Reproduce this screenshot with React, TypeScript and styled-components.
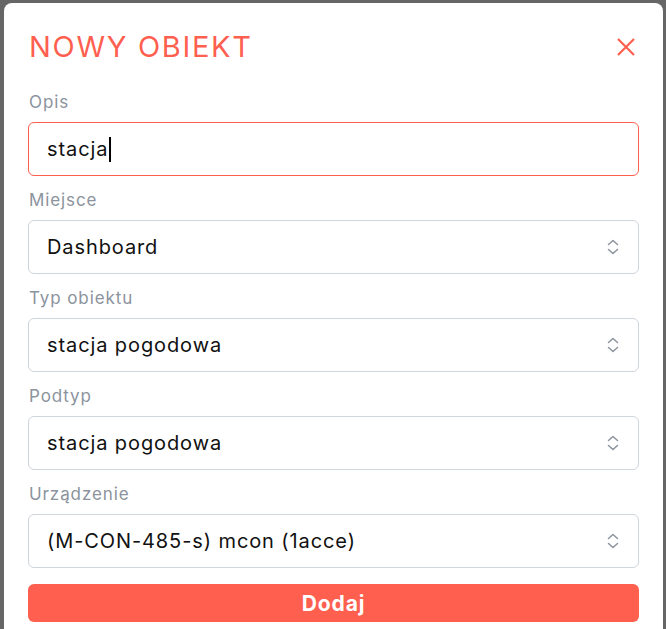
import styled, { createGlobalStyle } from 'styled-components';

const accentColor: string = '#fe5f4f';
const fieldFont: string = '"Inter", "Noto Sans", sans-serif';

const GlobalStyle = createGlobalStyle`
  html, body {
    margin: 0;
    padding: 0;
    height: 100%;
    overflow: hidden;
    background-color: #666666;
  }
  #root {
    height: 100%;
  }
`;

const Overlay = styled.div`
  height: 100%;
  padding: 3px 3px 0 4px;
  box-sizing: border-box;
  font-family: ${() => fieldFont};
`;

const ModalDiv = styled.div`
  background-color: #ffffff;
  border-radius: 8px;
  padding: 24px 24px 40px 24px;
  box-sizing: border-box;
  min-height: 700px;
  display: flex;
  flex-direction: column;
`;

const HeaderDiv = styled.div`
  display: flex;
  flex-direction: row;
  align-items: center;
  justify-content: space-between;
  height: 40px;
  margin-bottom: 23px;
`;

const TitleDiv = styled.h2`
  margin: 0 0 0 1px;
  font-size: 29px;
  font-weight: 400;
  line-height: 40px;
  color: ${() => accentColor};
  letter-spacing: 1.7px;
`;

const CloseButton = styled.button`
  border: none;
  background: none;
  padding: 0;
  margin-right: 2px;
  width: 22px;
  height: 22px;
  display: flex;
  align-items: center;
  justify-content: center;
  cursor: pointer;
`;

const FieldDiv = styled.div`
  display: flex;
  flex-direction: column;
  margin-bottom: 12px;
`;

const LabelDiv = styled.label`
  font-size: 17px;
  line-height: 24px;
  letter-spacing: 0.9px;
  color: #8b939d;
  margin: 0 0 8px 1px;
`;

const InputBox = styled.div<{ $focused?: boolean }>`
  height: 54px;
  box-sizing: border-box;
  border: 1px solid ${(p) => (p.$focused ? accentColor : '#cfd5dc')};
  border-radius: 6px;
  padding: 0 18px;
  display: flex;
  flex-direction: row;
  align-items: center;
  justify-content: space-between;
  font-size: 20px;
  letter-spacing: 0.9px;
  color: #111111;
`;

const ValueSpan = styled.span`
  display: flex;
  align-items: center;
`;

const Caret = styled.span`
  display: inline-block;
  width: 2px;
  height: 25px;
  background-color: #000000;
  margin-left: 1px;
`;

const SubmitButton = styled.button`
  margin-top: 4px;
  height: 38px;
  border: none;
  border-radius: 6px;
  background-color: ${() => accentColor};
  color: #ffffff;
  font-family: ${() => fieldFont};
  font-size: 21px;
  letter-spacing: 0.9px;
  font-weight: 700;
  cursor: pointer;
`;

function SelectorIcon() {
  return (
    <svg width="14" height="18" viewBox="0 0 14 18" fill="none">
      <path
        d="M2.5 6.5 L7 2.5 L11.5 6.5"
        stroke="#8b939d"
        strokeWidth="1.5"
        strokeLinecap="round"
        strokeLinejoin="round"
      />
      <path
        d="M2.5 11.5 L7 15.5 L11.5 11.5"
        stroke="#8b939d"
        strokeWidth="1.5"
        strokeLinecap="round"
        strokeLinejoin="round"
      />
    </svg>
  );
}

type SelectFieldProps = {
  label: string;
  value: string;
};

function SelectField({ label, value }: SelectFieldProps) {
  return (
    <FieldDiv>
      <LabelDiv>{label}</LabelDiv>
      <InputBox>
        <ValueSpan>{value}</ValueSpan>
        <SelectorIcon />
      </InputBox>
    </FieldDiv>
  );
}

export default function App() {
  return (
    <>
      <GlobalStyle />
      <Overlay>
        <ModalDiv>
          <HeaderDiv>
            <TitleDiv>NOWY OBIEKT</TitleDiv>
            <CloseButton aria-label="Zamknij">
              <svg width="20" height="20" viewBox="0 0 20 20">
                <path
                  d="M2 2 L18 18 M18 2 L2 18"
                  stroke={accentColor}
                  strokeWidth="2.2"
                />
              </svg>
            </CloseButton>
          </HeaderDiv>
          <FieldDiv>
            <LabelDiv>Opis</LabelDiv>
            <InputBox $focused>
              <ValueSpan>
                stacja
                <Caret />
              </ValueSpan>
            </InputBox>
          </FieldDiv>
          <SelectField label="Miejsce" value="Dashboard" />
          <SelectField label="Typ obiektu" value="stacja pogodowa" />
          <SelectField label="Podtyp" value="stacja pogodowa" />
          <SelectField label="Urządzenie" value="(M-CON-485-s) mcon (1acce)" />
          <SubmitButton>Dodaj</SubmitButton>
        </ModalDiv>
      </Overlay>
    </>
  );
}
